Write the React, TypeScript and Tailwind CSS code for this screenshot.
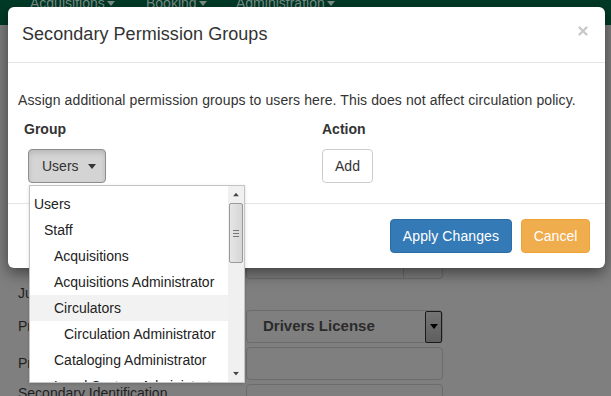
import { X } from "lucide-react";

const groups = [
  { name: "Users", depth: 0 },
  { name: "Staff", depth: 1 },
  { name: "Acquisitions", depth: 2 },
  { name: "Acquisitions Administrator", depth: 2 },
  { name: "Circulators", depth: 2, hover: true },
  { name: "Circulation Administrator", depth: 3 },
  { name: "Cataloging Administrator", depth: 2 },
  { name: "Local System Administrator", depth: 2 },
];

const indent = ["pl-[4px]", "pl-[14px]", "pl-[24px]", "pl-[34px]"];

function Caret({ className }: { className?: string }) {
  return (
    <svg width="8" height="5" viewBox="0 0 8 5" className={className}>
      <path d="M0 0h8L4 5z" fill="currentColor" />
    </svg>
  );
}

function NavItem({ label, width }: { label: string; width: string }) {
  return (
    <div className={`flex items-center gap-[2px] ${width}`}>
      <span>{label}</span>
      <Caret />
    </div>
  );
}

function GroupList() {
  return (
    <div className="absolute left-[29px] top-[185px] w-[216px] h-[198px] flex bg-white border border-[#c4c4c4] shadow-[0_1px_3px_rgba(0,0,0,0.15)]">
      <div className="flex-1 overflow-hidden pt-[5px]">
        {groups.map((g) => (
          <div
            key={g.name}
            className={`h-[26px] leading-[26px] whitespace-nowrap text-[#222] ${indent[g.depth]} ${g.hover ? "bg-[#f2f2f2]" : ""}`}
          >
            {g.name}
          </div>
        ))}
      </div>
      <div className="w-[16px] flex flex-col bg-[#f0f0f0]">
        <div className="h-[17px] flex items-center justify-center">
          <Caret className="rotate-180 text-[#444] scale-75" />
        </div>
        <div className="h-[60px] mx-[1px] rounded-[2px] border border-[#9a9a9a] bg-gradient-to-r from-[#e6e6e6] to-[#d6d6d6] flex flex-col items-center justify-center gap-[2px]">
          <div className="w-[6px] h-px bg-[#777]" />
          <div className="w-[6px] h-px bg-[#777]" />
          <div className="w-[6px] h-px bg-[#777]" />
        </div>
        <div className="flex-1" />
        <div className="h-[17px] flex items-center justify-center">
          <Caret className="text-[#444] scale-75" />
        </div>
      </div>
    </div>
  );
}

export default function App() {
  return (
    <div className="relative w-[611px] h-[396px] overflow-hidden bg-[#7f7f7f] font-['Liberation_Sans',Arial,sans-serif] text-[14px] text-[#333]">
      {/* page behind the backdrop */}
      <div className="h-[25px] bg-[#003a27] overflow-hidden">
        <div className="flex -mt-[7px] pl-[30px] leading-[20px] text-[#7d8f87] text-[14px]">
          <NavItem label="Acquisitions" width="w-[116px]" />
          <NavItem label="Booking" width="w-[90px]" />
          <NavItem label="Administration" width="w-[120px]" />
        </div>
      </div>

      <div className="pt-[221px] pl-[18px] text-[#1f1f1f]">
        <div className="flex h-[33px]">
          <div className="w-[228px]" />
          <div className="w-[158px] border border-[#6c6c6c] rounded-l-[4px]" />
          <div className="w-[39px] border border-l-0 border-[#6c6c6c] rounded-r-[4px]" />
        </div>
        <div className="mt-[4px] h-[20px] leading-[20px]">Juvenile</div>
        <div className="mt-[7px] flex h-[33px]">
          <div className="w-[228px] leading-[33px]">Primary Identification Type</div>
          <div className="w-[197px] border border-[#6c6c6c] rounded-[4px] flex items-center">
            <span className="flex-1 pl-[16px] font-bold text-[15px] text-[#2b2b2b]">Drivers License</span>
            <div className="w-[17px] h-[32px] bg-gradient-to-b from-[#747474] to-[#5f5f5f] border border-[#1a1a1a] rounded-[2px] flex items-center justify-center text-black">
              <Caret />
            </div>
          </div>
        </div>
        <div className="mt-[4px] flex h-[33px]">
          <div className="w-[228px] leading-[33px]">Primary Identification</div>
          <div className="w-[197px] border border-[#6c6c6c] rounded-[4px]" />
        </div>
        <div className="mt-[4px] flex h-[33px]">
          <div className="w-[228px] leading-[18px]">Secondary Identification</div>
          <div className="w-[197px] border border-[#6c6c6c] rounded-[4px]" />
        </div>
      </div>

      {/* modal */}
      <div className="absolute left-[8px] top-[7px] w-[597px] bg-white rounded-[6px] shadow-[0_5px_15px_rgba(0,0,0,0.5)]">
        <div className="h-[56px] flex items-center justify-between pl-[14px] pr-[15px] border-b border-[#e5e5e5]">
          <h4 className="text-[18px] tracking-[0.05px] text-[#333]">Secondary Permission Groups</h4>
          <X size={14} strokeWidth={4} className="text-[#c8c8c8] -mt-[8px]" />
        </div>

        <div className="pt-[27px] pb-[20px] pl-[10px] pr-[15px]">
          <p className="leading-[20px] tracking-[0.1px]">
            Assign additional permission groups to users here. This does not affect circulation policy.
          </p>
          <div className="flex mt-[9px]">
            <div className="w-[304px] pl-[6px]">
              <div className="font-bold leading-[20px]">Group</div>
              <button className="mt-[10px] ml-[4px] h-[34px] w-[78px] flex items-center gap-[9px] pl-[13px] rounded-[4px] bg-[#d4d4d4] border border-[#8c8c8c] shadow-[inset_0_3px_5px_rgba(0,0,0,0.125)] text-[#333]">
                Users
                <Caret />
              </button>
            </div>
            <div>
              <div className="font-bold leading-[20px]">Action</div>
              <button className="mt-[10px] h-[34px] w-[51px] rounded-[4px] bg-white border border-[#ccc] text-[#333]">
                Add
              </button>
            </div>
          </div>
        </div>

        <div className="border-t border-[#e5e5e5] py-[15px] pr-[15px] flex justify-end gap-[9px]">
          <button className="h-[34px] w-[122px] rounded-[4px] bg-[#337ab7] border border-[#2e6da4] text-white tracking-[0.1px]">
            Apply Changes
          </button>
          <button className="h-[34px] w-[69px] rounded-[4px] bg-[#f0ad4e] border border-[#eea236] text-white">
            Cancel
          </button>
        </div>
      </div>

      <GroupList />
    </div>
  );
}
